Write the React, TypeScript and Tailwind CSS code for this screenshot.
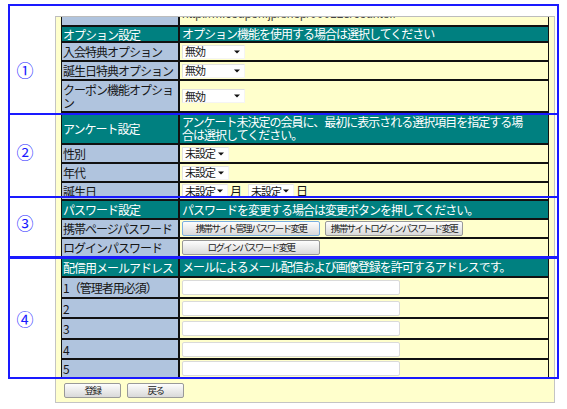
import React from 'react';

const HDR = 'bg-[#008080] text-white';
const LAB = 'bg-[#b0c4de] text-[#161616]';
const VAL = 'bg-[#ffffcc] text-[#161616]';

interface RowProps {
    readonly h: string;
    readonly label?: React.ReactNode;
    readonly header?: boolean;
    readonly children?: React.ReactNode;
}

function Row({ h, label, header = false, children }: RowProps) {
    return (
        <div className={`grid grid-cols-[116px_368px] gap-x-[2px] ${h}`}>
            <div className={`flex items-center pl-[1px] overflow-hidden ${header ? HDR : LAB}`}>
                <span className="leading-[13px]">{label}</span>
            </div>
            <div className={`flex items-center pl-[2px] overflow-hidden ${header ? HDR : VAL}`}>{children}</div>
        </div>
    );
}

function Caret() {
    return (
        <svg width="6" height="4" viewBox="0 0 6 4" className="shrink-0">
            <path d="M0 0.5h6L3 3.5z" fill="#111" />
        </svg>
    );
}

function Sel({ w, text }: { readonly w: string; readonly text: string }) {
    return (
        <div
            className={`${w} h-[14px] shrink-0 bg-white border border-[#e2e2e2] border-r-[#f4f4f4] border-b-[#f4f4f4] flex items-center justify-between pl-[2px] pr-[4px] text-[11px] tracking-[-1px] leading-none whitespace-nowrap`}
        >
            <span>{text}</span>
            <Caret />
        </div>
    );
}

function Btn({ w, text, focus = false }: { readonly w: string; readonly text: string; readonly focus?: boolean }) {
    return (
        <div
            className={`${w} h-[15px] shrink-0 rounded-[2px] border ${focus ? 'border-[#79aee0]' : 'border-[#999]'} bg-linear-to-b from-[#fdfdfd] to-[#d9d9d9] flex items-center justify-center text-[9.5px] tracking-[-1.6px] leading-none text-[#222] whitespace-nowrap`}
        >
            {text}
        </div>
    );
}

function Field() {
    return <div className="w-[218px] h-[15px] bg-white border border-[#dadada] rounded-[2px]" />;
}

function Circled({ top, ch }: { readonly top: string; readonly ch: string }) {
    return (
        <div className={`absolute left-[16px] ${top} w-[18px] h-[18px] text-[17px] leading-[18px] text-center tracking-normal text-[#1a1aff]`}>
            {ch}
        </div>
    );
}

export default function App() {
    return (
        <div className="relative w-[567px] h-[409px] bg-white overflow-hidden font-['Noto_Sans_CJK_JP','Liberation_Sans',sans-serif] text-[12px] tracking-[-1px]">
            <div className="pt-[16px] pl-[55px]">
                <div className="w-[500px] h-[387px] border border-[#c4c4c4] border-t-[#bdbdbd] bg-[#ffffcc] pl-[5px]">
                    {/* settings table */}
                    <div className="w-[488px] bg-[#111] px-px pb-px flex flex-col gap-y-[2px]">
                        <Row h="h-[8px]" label="">
                            <div className="h-[8px] overflow-hidden self-start">
                                <div className="-mt-[10px] text-[12px] leading-[14px] tracking-normal text-[#444] font-['Liberation_Sans',sans-serif]">
                                    http://m.coupon.jp/shop/000123/counter/
                                </div>
                            </div>
                        </Row>
                        <Row h="h-[14px]" header label="オプション設定">
                            オプション機能を使用する場合は選択してください
                        </Row>
                        <Row h="h-[17px]" label="入会特典オプション">
                            <Sel w="w-[63px]" text="無効" />
                        </Row>
                        <Row h="h-[17px]" label="誕生日特典オプション">
                            <Sel w="w-[63px]" text="無効" />
                        </Row>
                        <Row
                            h="h-[30px]"
                            label={
                                <>
                                    クーポン機能オプショ
                                    <br />ン
                                </>
                            }
                        >
                            <Sel w="w-[63px]" text="無効" />
                        </Row>

                        <Row h="h-[30px]" header label="アンケート設定">
                            <span className="leading-[13px]">
                                アンケート未決定の会員に、最初に表示される選択項目を指定する場
                                <br />
                                合は選択してください。
                            </span>
                        </Row>
                        <Row h="h-[17px]" label="性別">
                            <Sel w="w-[47px]" text="未設定" />
                        </Row>
                        <Row h="h-[17px]" label="年代">
                            <Sel w="w-[47px]" text="未設定" />
                        </Row>
                        <Row h="h-[16px]" label="誕生日">
                            <div className="flex items-center whitespace-nowrap">
                                <Sel w="w-[46px]" text="未設定" />
                                <span className="ml-[2px] mr-[7px]">月</span>
                                <Sel w="w-[46px]" text="未設定" />
                                <span className="ml-[2px]">日</span>
                            </div>
                        </Row>

                        <Row h="h-[17px]" header label="パスワード設定">
                            パスワードを変更する場合は変更ボタンを押してください。
                        </Row>
                        <Row h="h-[17px]" label="携帯ページパスワード">
                            <div className="flex gap-[5px]">
                                <Btn w="w-[138px]" text="携帯サイト管理パスワード変更" focus />
                                <Btn w="w-[138px]" text="携帯サイトログインパスワード変更" />
                            </div>
                        </Row>
                        <Row h="h-[17px]" label="ログインパスワード">
                            <Btn w="w-[138px]" text="ログインパスワード変更" />
                        </Row>

                        <Row h="h-[18px]" header label="配信用メールアドレス">
                            メールによるメール配信および画像登録を許可するアドレスです。
                        </Row>
                        <Row h="h-[19px]" label="1（管理者用必須）">
                            <Field />
                        </Row>
                        <Row h="h-[18px]" label="2">
                            <Field />
                        </Row>
                        <Row h="h-[19px]" label="3">
                            <Field />
                        </Row>
                        <Row h="h-[18px]" label="4">
                            <Field />
                        </Row>
                        <Row h="h-[17px]" label="5">
                            <Field />
                        </Row>
                    </div>

                    <div className="flex gap-[6px] pl-[3px] mt-[5px]">
                        <Btn w="w-[57px]" text="登録" />
                        <Btn w="w-[57px]" text="戻る" />
                    </div>
                </div>
            </div>

            {/* annotation boxes */}
            <div className="absolute left-[8px] top-[4px] w-[551px] h-[111px] border-2 border-[#1a1aff]" />
            <div className="absolute left-[8px] top-[113px] w-[551px] h-[85px] border-2 border-[#1a1aff]" />
            <div className="absolute left-[8px] top-[196px] w-[551px] h-[62px] border-2 border-[#1a1aff]" />
            <div className="absolute left-[8px] top-[257px] w-[551px] h-[122px] border-2 border-[#1a1aff]" />

            <Circled top="top-[61px]" ch="①" />
            <Circled top="top-[143px]" ch="②" />
            <Circled top="top-[214px]" ch="③" />
            <Circled top="top-[310px]" ch="④" />
        </div>
    );
}
